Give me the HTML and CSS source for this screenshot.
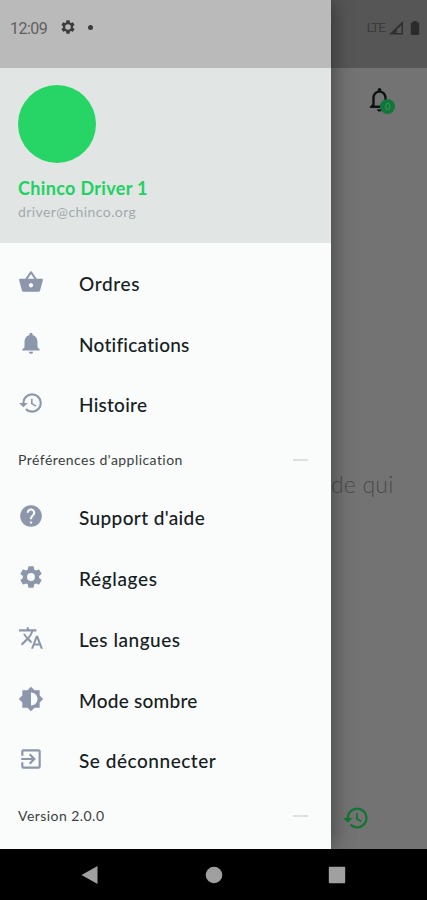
FILE: index.html
```html
<!DOCTYPE html>
<html lang="fr">
<head>
<meta charset="utf-8">
<title>Chinco Driver</title>
<link rel="stylesheet" href="styles.css">
</head>
<body>
<div class="screen">
  <main class="page">
    <div class="page-status">
      <span class="lte">LTE</span>
      <svg class="signal" viewBox="0 0 14 14"><path d="M0 13.500 14 0v13.500z" fill="#303030"/><path d="M7.600 8.700 12.500 4v8H7.600z" fill="#565656"/></svg>
      <svg class="battery" viewBox="0 0 10 15"><path d="M3 0h4v1.500h1.500q1 0 1 1V14q0 1-1 1h-7q-1 0-1-1V2.500q0-1 1-1H3z" fill="#2b2b2b"/></svg>
    </div>
    <div class="page-bar">
      <div class="bell">
        <svg viewBox="0 0 24 24"><path d="M12 22c1.100 0 2-.9 2-2h-4c0 1.100.9 2 2 2zm6-6v-5c0-3.070-1.630-5.640-4.500-6.320V4c0-.83-.67-1.500-1.500-1.500s-1.500.67-1.500 1.500v.68C7.640 5.360 6 7.920 6 11v5l-2 2v1h16v-1l-2-2zm-2 1H8v-6c0-2.480 1.510-4.500 4-4.500s4 2.020 4 4.500v6z" fill="#0c1412"/></svg>
        <span class="badge">0</span>
      </div>
    </div>
    <p class="page-text">de qui</p>
    <svg class="page-history" viewBox="0 0 24 24"><path d="M13 3a9 9 0 0 0-9 9H1l3.890 3.890.07.14L9 12H6c0-3.870 3.130-7 7-7s7 3.130 7 7-3.130 7-7 7c-1.930 0-3.680-.79-4.940-2.060l-1.420 1.420A8.954 8.954 0 0 0 13 21a9 9 0 0 0 0-18zm-1 5v5l4.280 2.540.72-1.210-3.500-2.080V8H12z" fill="#127532"/></svg>
  </main>

  <aside class="drawer">
    <div class="status">
      <span class="time">12:09</span>
      <svg class="status-gear" viewBox="0 0 24 24"><path d="M19.430 12.980c.04-.32.07-.64.07-.98s-.03-.66-.07-.98l2.110-1.650c.19-.15.24-.42.12-.64l-2-3.460c-.12-.22-.39-.3-.61-.22l-2.490 1c-.52-.4-1.080-.73-1.690-.98l-.38-2.650A.488.488 0 0 0 14 2h-4c-.25 0-.46.18-.49.42l-.38 2.650c-.61.25-1.170.59-1.690.98l-2.490-1c-.23-.09-.49 0-.61.22l-2 3.460c-.13.22-.07.49.12.64l2.110 1.650c-.04.32-.07.65-.07.98s.03.66.07.98l-2.110 1.650c-.19.15-.24.42-.12.64l2 3.460c.12.22.39.3.61.22l2.490-1c.52.4 1.080.73 1.690.98l.38 2.650c.03.24.24.42.49.42h4c.25 0 .46-.18.49-.42l.38-2.650c.61-.25 1.170-.59 1.690-.98l2.490 1c.23.09.49 0 .61-.22l2-3.460c.12-.22.07-.49-.12-.64l-2.110-1.650zM12 16.200a4.200 4.200 0 1 1 0-8.400 4.200 4.200 0 0 1 0 8.400z"/></svg>
      <span class="dot"></span>
    </div>
    <header class="profile">
      <div class="avatar"></div>
      <div class="name">Chinco Driver 1</div>
      <div class="email">driver@chinco.org</div>
    </header>
    <nav class="menu">
      <a class="item"><svg viewBox="0 0 24 24"><path d="m17.210 9-4.380-6.560a.993.993 0 0 0-.83-.42c-.32 0-.64.14-.83.430L6.790 9H2c-.55 0-1 .45-1 1 0 .09.010.18.040.27l2.540 9.270c.23.84 1 1.460 1.920 1.460h13c.92 0 1.690-.62 1.930-1.460l2.540-9.270L23 10c0-.55-.45-1-1-1h-4.790zM9 9l3-4.400L15 9H9zm3 8c-1.100 0-2-.9-2-2s.9-2 2-2 2 .9 2 2-.9 2-2 2z"/></svg><span class="track-xl">Ordres</span></a>
      <a class="item"><svg viewBox="0 0 24 24"><path d="M12 22c1.100 0 2-.9 2-2h-4c0 1.100.89 2 2 2zm6-6v-5c0-3.070-1.640-5.640-4.500-6.320V4c0-.83-.67-1.500-1.500-1.500s-1.500.67-1.500 1.500v.68C7.630 5.360 6 7.920 6 11v5l-2 2v1h16v-1l-2-2z"/></svg><span class="track-s">Notifications</span></a>
      <a class="item"><svg viewBox="0 0 24 24"><path d="M13 3a9 9 0 0 0-9 9H1l3.890 3.890.07.14L9 12H6c0-3.870 3.130-7 7-7s7 3.130 7 7-3.130 7-7 7c-1.930 0-3.680-.79-4.940-2.060l-1.420 1.420A8.954 8.954 0 0 0 13 21a9 9 0 0 0 0-18zm-1 5v5l4.280 2.540.72-1.210-3.500-2.080V8H12z"/></svg><span class="track-s">Histoire</span></a>
      <div class="section"><span>Préférences d'application</span><i></i></div>
      <a class="item"><svg viewBox="0 0 24 24"><path d="M12 2C6.480 2 2 6.480 2 12s4.480 10 10 10 10-4.480 10-10S17.520 2 12 2zm1 17h-2v-2h2v2zm2.070-7.750-.9.920C13.450 12.900 13 13.500 13 15h-2v-.5c0-1.100.45-2.100 1.170-2.830l1.240-1.260c.37-.36.59-.86.59-1.410 0-1.100-.9-2-2-2s-2 .9-2 2H8c0-2.210 1.790-4 4-4s4 1.790 4 4c0 .88-.36 1.680-.93 2.250z"/></svg><span class="track-m">Support d'aide</span></a>
      <a class="item"><svg viewBox="0 0 24 24"><path d="M19.430 12.980c.04-.32.07-.64.07-.98s-.03-.66-.07-.98l2.110-1.650c.19-.15.24-.42.12-.64l-2-3.460c-.12-.22-.39-.3-.61-.22l-2.490 1c-.52-.4-1.080-.73-1.690-.98l-.38-2.650A.488.488 0 0 0 14 2h-4c-.25 0-.46.18-.49.42l-.38 2.650c-.61.25-1.170.59-1.690.98l-2.490-1c-.23-.09-.49 0-.61.22l-2 3.460c-.13.22-.07.49.12.64l2.110 1.650c-.04.32-.07.65-.07.98s.03.66.07.98l-2.110 1.650c-.19.15-.24.42-.12.64l2 3.460c.12.22.39.3.61.22l2.490-1c.52.4 1.080.73 1.690.98l.38 2.650c.03.24.24.42.49.42h4c.25 0 .46-.18.49-.42l.38-2.650c.61-.25 1.170-.59 1.690-.98l2.490 1c.23.09.49 0 .61-.22l2-3.460c.12-.22.07-.49-.12-.64l-2.110-1.650zM12 15.600a3.600 3.600 0 1 1 0-7.200 3.600 3.600 0 0 1 0 7.200z"/></svg><span class="track-xl">Réglages</span></a>
      <a class="item"><svg viewBox="0 0 24 24"><path d="m12.870 15.070-2.540-2.510.03-.03A17.520 17.520 0 0 0 14.070 6H17V4h-7V2H8v2H1v1.990h11.170C11.500 7.920 10.440 9.750 9 11.350 8.070 10.320 7.300 9.190 6.690 8h-2c.73 1.630 1.730 3.170 2.980 4.560l-5.090 5.020L4 19l5-5 3.110 3.110.76-2.040zM18.500 10h-2L12 22h2l1.120-3h4.750L21 22h2l-4.500-12zm-2.620 7 1.620-4.330L19.120 17h-3.240z"/></svg><span class="track-l">Les langues</span></a>
      <a class="item"><svg viewBox="0 0 24 24"><path d="M20 15.310 23.310 12 20 8.690V4h-4.690L12 .69 8.690 4H4v4.690L.69 12 4 15.310V20h4.690L12 23.310 15.310 20H20v-4.690zM12 18V6c3.310 0 6 2.690 6 6s-2.690 6-6 6z" fill-rule="evenodd"/></svg><span class="track-s">Mode sombre</span></a>
      <a class="item"><svg viewBox="0 0 24 24"><path d="M10.090 15.590 11.500 17l5-5-5-5-1.410 1.410L12.670 11H3v2h9.670l-2.580 2.590zM19 3H5a2 2 0 0 0-2 2v4h2V5h14v14H5v-4H3v4a2 2 0 0 0 2 2h14c1.100 0 2-.9 2-2V5c0-1.100-.9-2-2-2z"/></svg><span class="track-l">Se déconnecter</span></a>
      <div class="section"><span>Version 2.0.0</span><i></i></div>
    </nav>
  </aside>

  <footer class="navbar">
    <svg viewBox="0 0 20 20"><path d="M1.500 10 17.500 1v18z"/></svg>
    <svg viewBox="0 0 20 20"><circle cx="10" cy="10" r="8.300"/></svg>
    <svg viewBox="0 0 20 20"><rect x="1.800" y="1.800" width="16.400" height="16.400" rx="1"/></svg>
  </footer>
</div>
</body>
</html>
```
FILE: styles.css
```css
* { box-sizing: border-box; }
body { margin: 0; font-family: Lato, "Open Sans", sans-serif; }
.screen {
  position: relative;
  width: 427px;
  height: 900px;
  overflow: hidden;
  display: flex;
  flex-direction: column;
  background: #000;
}

/* dimmed page behind the drawer */
.page {
  height: 849px;
  padding-left: 331px;
  background: #737373;
  display: flex;
  flex-direction: column;
}
.page-status {
  height: 68px;
  margin-left: -331px;
  padding: 0 7px 13px 0;
  background: #565656;
  display: flex;
  align-items: center;
  justify-content: flex-end;
}
.lte { font: 13.5px Roboto, sans-serif; letter-spacing: -1px; color: #3b3b3b; margin-right: 4px; padding-bottom: 1px; }
.signal { width: 14px; height: 14px; margin-right: 7px; }
.battery { width: 10px; height: 14px; }
.page-bar { height: 62px; padding: 17px 0 0 34px; }
.bell { position: relative; width: 29px; height: 29px; }
.bell svg { display: block; width: 29px; height: 29px; }
.badge {
  position: absolute;
  left: 15px;
  top: 14px;
  width: 15px;
  height: 15px;
  border-radius: 50%;
  background: #12763a;
  color: #3b9a5e;
  font-size: 9px;
  line-height: 15px;
  text-align: center;
}
.page-text {
  margin: 339px 0 0;
  height: 30px;
  line-height: 30px;
  font-size: 23px;
  font-weight: 300;
  letter-spacing: .2px;
  color: #4b4b4b;
  white-space: nowrap;
}
.page-history { width: 28px; height: 28px; margin: 305px 0 0 11px; }

/* drawer */
.drawer {
  position: absolute;
  left: 0;
  top: 0;
  width: 331px;
  height: 849px;
  background: #fafbfb;
  box-shadow: 2px 0 20px rgba(0, 0, 0, .4);
}
.status {
  height: 68px;
  padding: 0 0 14px 10px;
  background: #bababa;
  display: flex;
  align-items: center;
}
.time { width: 50px; font: 16px Roboto, sans-serif; letter-spacing: -.5px; color: #606060; padding-top: 2px; }
.status-gear { width: 16px; height: 16px; fill: #3d3d3d; }
.dot { width: 5px; height: 5px; border-radius: 50%; background: #3d3d3d; margin-left: 12px; }
.profile { height: 175px; padding: 17px 18px 0; background: #e1e5e4; }
.avatar { width: 78px; height: 78px; border-radius: 50%; background: #27d567; }
.name {
  margin-top: 14px;
  font-size: 18px;
  line-height: 22px;
  font-weight: 700;
  letter-spacing: .34px;
  color: #20d261;
  white-space: nowrap;
}
.email { margin-top: 4px; font-size: 14px; line-height: 18px; letter-spacing: .42px; color: #a3a9ad; }
.menu { padding-top: 10px; display: flex; flex-direction: column; }
.item {
  height: 60.75px;
  padding-left: 18px;
  display: flex;
  align-items: center;
  gap: 35px;
  font-size: 19px;
  font-weight: 500;
  color: #14201e;
  white-space: nowrap;
}
.item svg { width: 26px; height: 26px; fill: #8c97ac; margin-bottom: 3px; }
.track-s { letter-spacing: .25px; }
.track-m { letter-spacing: .38px; }
.track-l { letter-spacing: .53px; }
.track-xl { letter-spacing: .65px; }
.section {
  height: 52.25px;
  padding: 0 23px 3px 18px;
  display: flex;
  align-items: center;
  justify-content: space-between;
  font-size: 14px;
  letter-spacing: .45px;
  color: #39413f;
  white-space: nowrap;
}
.section i { width: 15px; height: 2px; background: #dedfdf; }

.navbar {
  height: 51px;
  padding: 0 80px;
  display: flex;
  align-items: center;
  justify-content: space-between;
}
.navbar svg { width: 20px; height: 20px; fill: #a0a0a0; }
```
